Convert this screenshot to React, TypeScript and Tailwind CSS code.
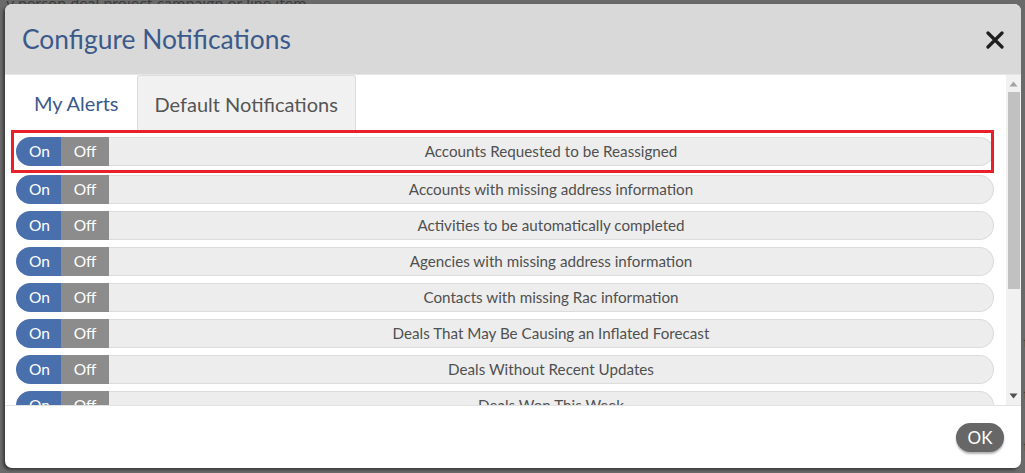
import React from "react";

const rows = [
  "Accounts Requested to be Reassigned",
  "Accounts with missing address information",
  "Activities to be automatically completed",
  "Agencies with missing address information",
  "Contacts with missing Rac information",
  "Deals That May Be Causing an Inflated Forecast",
  "Deals Without Recent Updates",
  "Deals Won This Week",
  "Leads Awaiting Follow Up",
  "Opportunities Closing Soon",
];

function Row({ label, first }: { label: string; first?: boolean }) {
  return (
    <div
      className={
        first
          ? "mb-[2px] flex h-[29px] shrink-0 items-stretch text-[15.2px] leading-none"
          : "flex h-[29px] shrink-0 items-stretch text-[15.2px] leading-none"
      }
    >
      <div className="flex w-[45px] items-center justify-center rounded-l-full bg-[#4a6fad] pl-[2px] text-[15.5px] text-white">
        On
      </div>
      <div className="flex w-[48px] items-center justify-center bg-[#8c8c8c] text-[15.5px] text-white">Off</div>
      <div className="flex flex-1 items-center justify-center rounded-r-full border border-l-0 border-[#dcdcdc] bg-[#ededed] text-[#505050]">
        {label}
      </div>
    </div>
  );
}

export default function App() {
  return (
    <div
      className="relative h-[473px] w-[1025px] overflow-hidden bg-[#6a6a6a]"
      style={{ fontFamily: "Lato, 'Open Sans', sans-serif" }}
    >
      <div className="absolute left-[6px] top-[-9px] text-[16px] text-[#3d3d3d]">
        y person deal project campaign or line item
      </div>
      <div className="absolute right-[-4px] top-[330px] flex flex-col gap-[28px] text-[16px] text-[#3d3d3d]">
        <span>t</span>
        <span>t</span>
        <span>t</span>
      </div>

      <div className="absolute left-[5px] top-[4px] flex h-[464px] w-[1016px] flex-col overflow-hidden rounded-[7px] bg-white shadow-[-2px_2px_3px_rgba(0,0,0,0.45)]">
        {/* header */}
        <div className="flex h-[71px] shrink-0 items-center justify-between border-b border-[#e6e6e6] bg-[#d9d9d9] pl-[17px] pr-[17px]">
          <div className="text-[26.4px] leading-none text-[#3b5a8b]">Configure Notifications</div>
          <svg width="18" height="18" viewBox="0 0 18 18" className="mt-[2px]">
            <path d="M2 2 L16 16 M16 2 L2 16" stroke="#1e1e1e" strokeWidth="3.2" strokeLinecap="round" />
          </svg>
        </div>

        {/* body */}
        <div className="flex h-[330px] shrink-0">
          <div className="flex flex-1 flex-col overflow-hidden pl-[11px] pr-[12px]">
            <div className="flex h-[55px] shrink-0 items-stretch">
              <div className="flex items-center px-[18px] pt-[1px] text-[20px] text-[#3b5a8b]">My Alerts</div>
              <div className="flex items-center rounded-t-[3px] border border-b-0 border-[#dddddd] bg-[#f1f1f1] px-[17px] pt-[1px] text-[20px] text-[#555555]">
                Default Notifications
              </div>
            </div>
            <div className="relative flex flex-col gap-[7px] pt-[7px]">
              {rows.map((r, i) => (
                <Row key={r} label={r} first={i === 0} />
              ))}
              <div className="pointer-events-none absolute left-[-5px] right-0 top-0 h-[43px] border-[3px] border-[#e8202a]" />
            </div>
          </div>
          {/* scrollbar */}
          <div className="flex w-[15px] shrink-0 flex-col items-center bg-[#f1f1f1]">
            <svg width="9" height="6" viewBox="0 0 9 6" className="mt-[6px]">
              <path d="M4.5 0.5 L8.5 5.5 L0.5 5.5 Z" fill="#a3a3a3" />
            </svg>
            <div className="mt-[5px] h-[197px] w-[12px] bg-[#c1c1c1]" />
            <div className="flex-1" />
            <svg width="9" height="6" viewBox="0 0 9 6" className="mb-[6px]">
              <path d="M0.5 0.5 L8.5 0.5 L4.5 5.5 Z" fill="#505050" />
            </svg>
          </div>
        </div>

        {/* footer */}
        <div className="flex flex-1 items-start justify-end border-t border-[#e2e2e2] pr-[17px] pt-[17px]">
          <button className="flex h-[29px] w-[48px] items-center justify-center rounded-full bg-[#676767] text-[17px] text-white shadow-[0_2px_2px_rgba(0,0,0,0.3)]">
            OK
          </button>
        </div>
      </div>
    </div>
  );
}
